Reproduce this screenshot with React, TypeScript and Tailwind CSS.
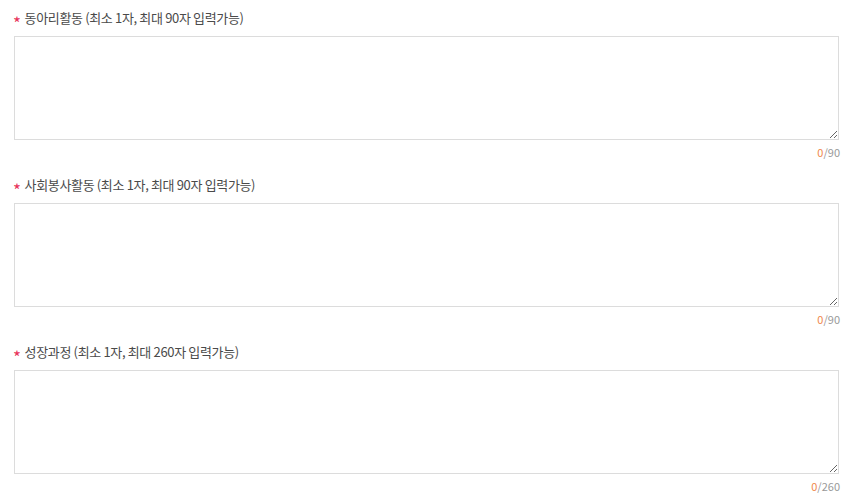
import React from 'react';

const fields = [
  { label: '동아리활동', min: 1, max: 90 },
  { label: '사회봉사활동', min: 1, max: 90 },
  { label: '성장과정', min: 1, max: 260 },
];

export default function App() {
  return (
    <div
      className="w-[856px] h-[502px] bg-white px-[14px] pt-[8px] overflow-hidden"
      style={{ fontFamily: '"Noto Sans CJK KR", "Noto Sans", sans-serif' }}
    >
      {fields.map((f) => (
        <div key={f.label} className="mb-[15px]">
          <label className="flex items-center h-[20px] text-[13px] text-[#4a4a4a] tracking-[-0.35px]">
            <span className="relative top-[4px] text-[#e8335a] text-[17px] leading-none mr-[4px] -ml-[1px]">*</span>
            {f.label} (최소 {f.min}자, 최대 {f.max}자 입력가능)
          </label>
          <textarea
            className="block mt-[8px] w-[825px] h-[104px] border border-[#dcdcdc] bg-white outline-none text-[13px] p-2"
          />
          <div className="flex justify-end h-[16px] items-center text-[11px] pr-[2px] mt-[4px]">
            <span className="text-[#f0874a]">0</span>
            <span className="text-[#999]">/{f.max}</span>
          </div>
        </div>
      ))}
    </div>
  );
}
